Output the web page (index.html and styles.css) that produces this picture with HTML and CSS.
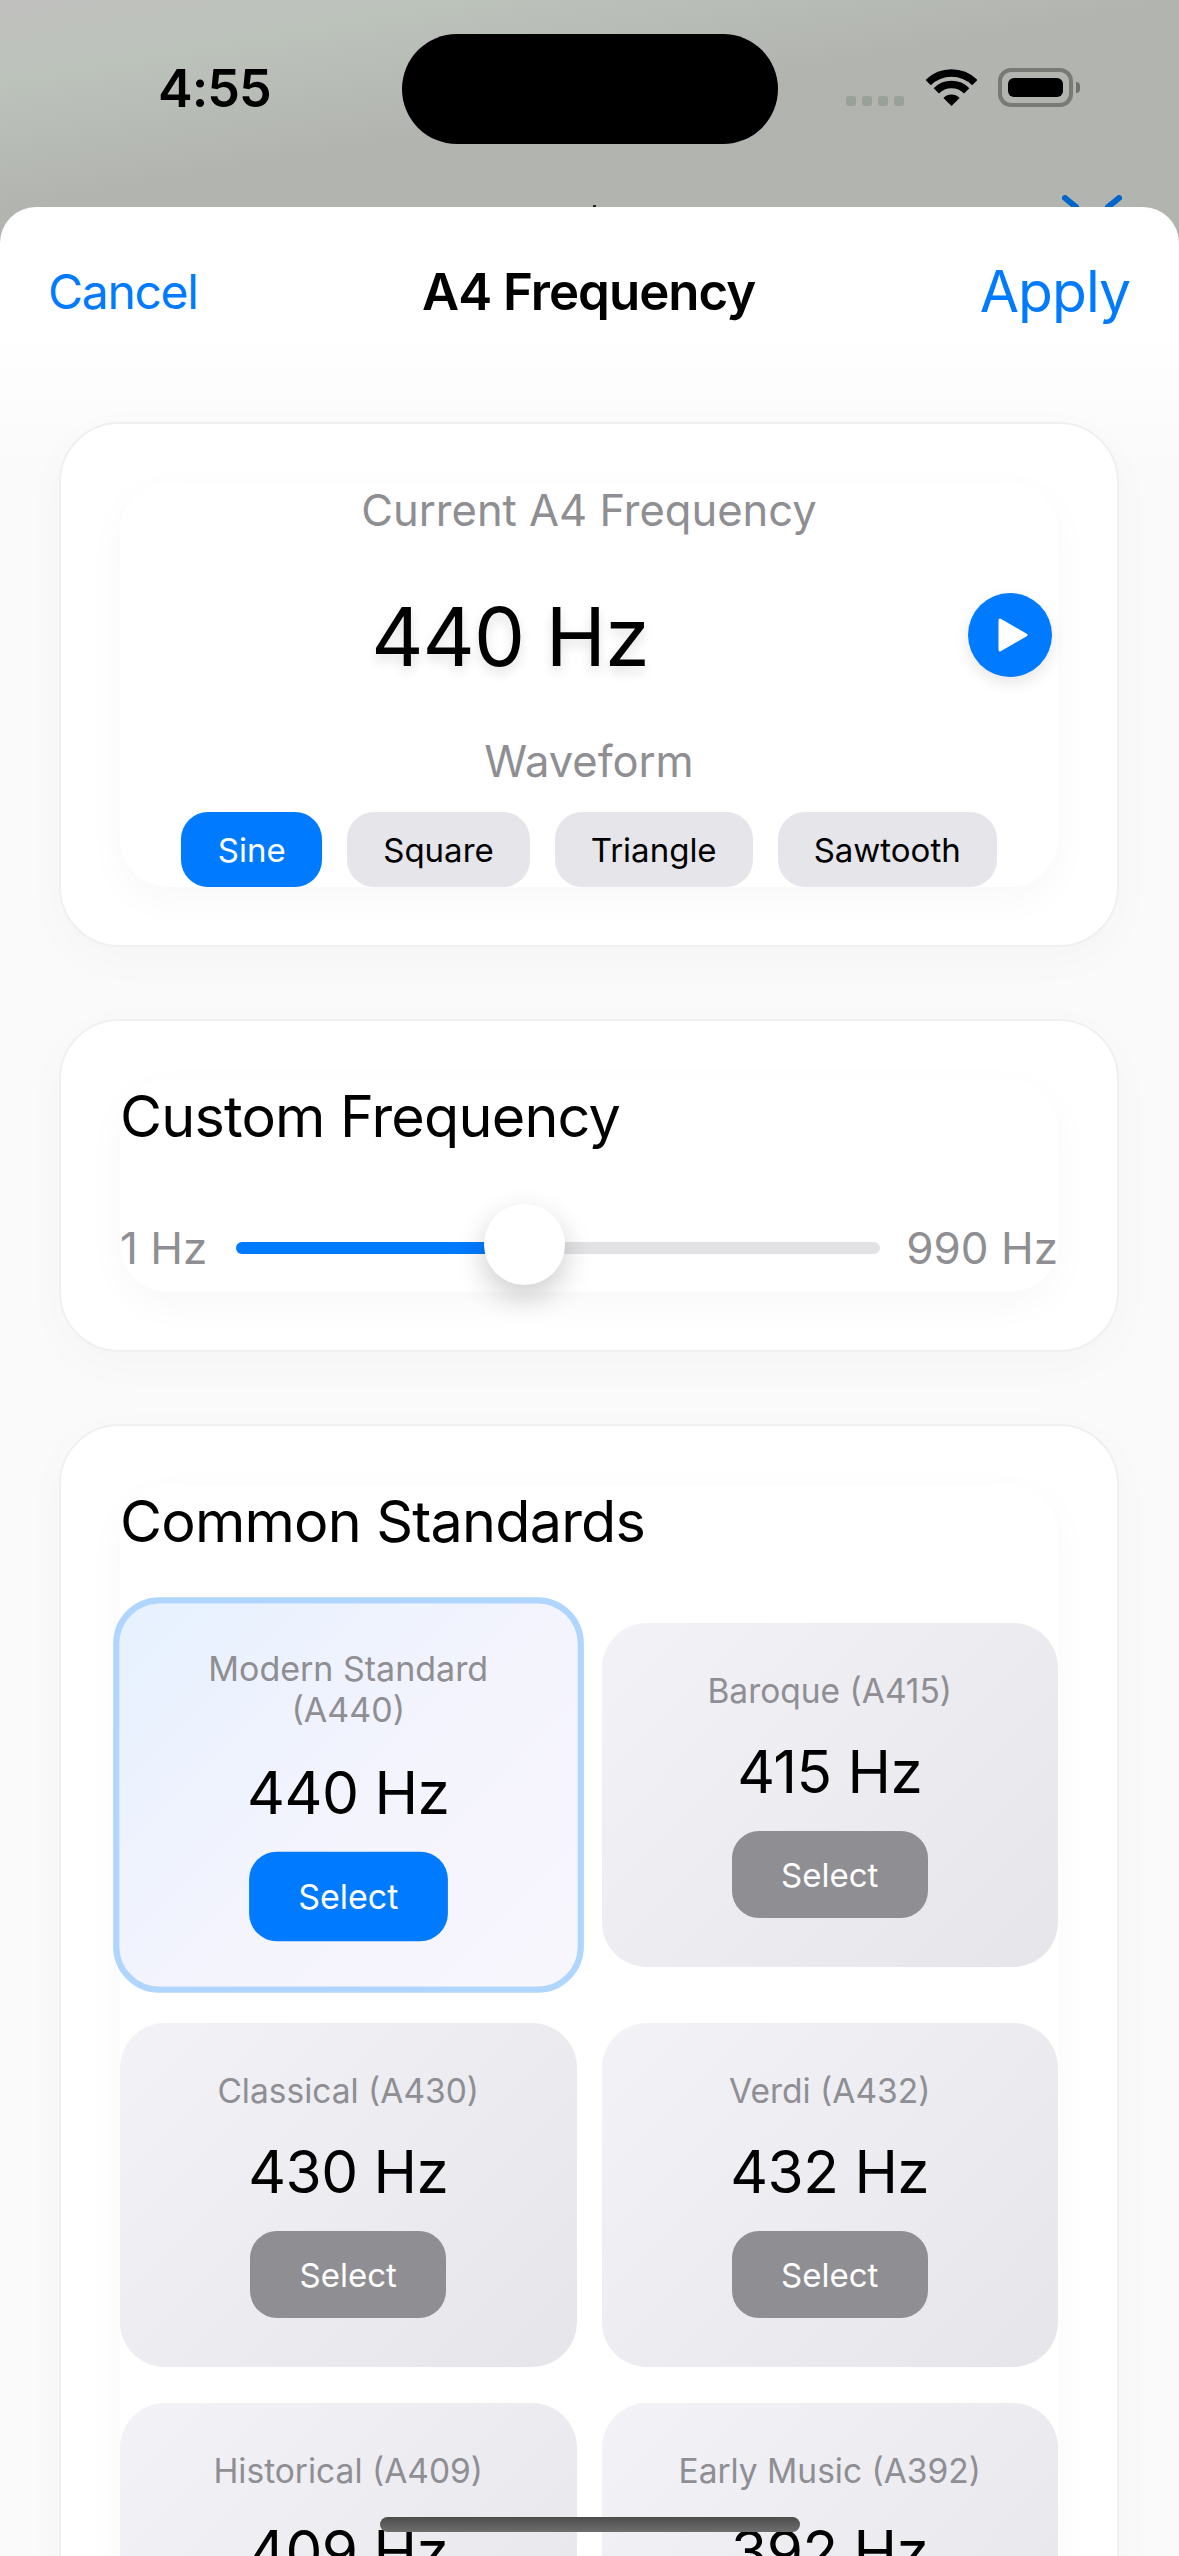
FILE: index.html
```html
<!DOCTYPE html>
<html lang="en">
<head>
  <meta charset="UTF-8">
  <title>A4 Frequency</title>
  <link rel="stylesheet" href="styles.css">
</head>
<body>

  <div class="status-bar">
    <span class="time">4:55</span>
    <div class="island"></div>
    <div class="signal">
      <i></i><i></i><i></i><i></i>
    </div>
    <svg class="wifi" width="51" height="37" viewBox="0 0 51 37">
      <path d="M2.2 13.7A33 33 0 0 1 48.8 13.7" fill="none" stroke="#000" stroke-width="7.5"/>
      <path d="M10.3 21.8A21.5 21.5 0 0 1 40.7 21.8" fill="none" stroke="#000" stroke-width="7.5"/>
      <path d="M25.5 37L17.4 28.9A11.5 11.5 0 0 1 33.6 28.9Z" fill="#000"/>
    </svg>
    <div class="battery"><div class="battery-level"></div></div>
    <div class="battery-cap"></div>
  </div>

  <!-- bits of the page behind the sheet -->
  <svg class="behind-close" width="60" height="12" viewBox="0 0 60 12">
    <path d="M3 3L14 12M57 3L46 12" fill="none" stroke="#0066cc" stroke-width="6" stroke-linecap="round"/>
  </svg>
  <div class="behind-dot"></div>

  <div class="sheet">
    <div class="nav">
      <span class="nav-cancel">Cancel</span>
      <span class="nav-title">A4 Frequency</span>
      <span class="nav-apply">Apply</span>
    </div>

    <div class="cards">
      <section class="card">
        <div class="inner inner-center">
          <div class="muted-label">Current A4 Frequency</div>
          <div class="current-row">
            <div class="spacer"></div>
            <div class="current-value">440 Hz</div>
            <div class="spacer"></div>
            <div class="play">
              <svg width="30" height="34" viewBox="0 0 30 34">
                <path d="M2 2L28 17L2 32Z" fill="#fff" stroke="#fff" stroke-width="3" stroke-linejoin="round"/>
              </svg>
            </div>
          </div>
          <div class="muted-label">Waveform</div>
          <div class="pills">
            <span class="pill pill-active">Sine</span>
            <span class="pill">Square</span>
            <span class="pill">Triangle</span>
            <span class="pill">Sawtooth</span>
          </div>
        </div>
      </section>

      <section class="card">
        <div class="inner">
          <h2 class="card-title">Custom Frequency</h2>
          <div class="slider-row">
            <span class="slider-label">1 Hz</span>
            <div class="track">
              <div class="track-fill"></div>
              <div class="thumb"></div>
            </div>
            <span class="slider-label">990 Hz</span>
          </div>
        </div>
      </section>

      <section class="card">
        <div class="inner">
          <h2 class="card-title">Common Standards</h2>
          <div class="standards">
            <div class="tile tile-selected">
              <div class="tile-label">Modern Standard (A440)</div>
              <div class="tile-value">440 Hz</div>
              <span class="select-btn">Select</span>
            </div>
            <div class="tile">
              <div class="tile-label">Baroque (A415)</div>
              <div class="tile-value">415 Hz</div>
              <span class="select-btn">Select</span>
            </div>
            <div class="tile">
              <div class="tile-label">Classical (A430)</div>
              <div class="tile-value">430 Hz</div>
              <span class="select-btn">Select</span>
            </div>
            <div class="tile">
              <div class="tile-label">Verdi (A432)</div>
              <div class="tile-value">432 Hz</div>
              <span class="select-btn">Select</span>
            </div>
            <div class="tile">
              <div class="tile-label">Historical (A409)</div>
              <div class="tile-value">409 Hz</div>
              <span class="select-btn">Select</span>
            </div>
            <div class="tile">
              <div class="tile-label">Early Music (A392)</div>
              <div class="tile-value">392 Hz</div>
              <span class="select-btn">Select</span>
            </div>
          </div>
        </div>
      </section>
    </div>
  </div>

  <div class="home-indicator"></div>

</body>
</html>
```

FILE: styles.css
```css
* {
  box-sizing: border-box;
}

html, body {
  margin: 0;
  height: 2556px;
  overflow: hidden;
}

body {
  position: relative;
  font-family: Inter, "Liberation Sans", sans-serif;
  color: #000;
  background: linear-gradient(170deg, #c0c0be 0, #bcc3bb 80px, #b2b4b0 207px);
}

/* status bar */
.status-bar {
  display: flex;
  align-items: flex-start;
  height: 207px;
  padding: 34px 0 0 158px;
}

.time {
  width: 112px;
  margin-top: 26px;
  font-size: 52px;
  line-height: 58px;
  font-weight: 600;
  letter-spacing: -1px;
}

.island {
  width: 376px;
  height: 110px;
  margin-left: 132px;
  border-radius: 55px;
  background: #000;
}

.signal {
  display: flex;
  gap: 6px;
  margin: 62px 0 0 68px;
}

.signal i {
  width: 10px;
  height: 10px;
  border-radius: 3px;
  background: #98a098;
}

.wifi {
  margin: 35px 0 0 22px;
}

.battery {
  width: 75px;
  height: 39px;
  margin: 34px 0 0 21px;
  padding: 6px;
  border: 4px solid #777a76;
  border-radius: 13px;
}

.battery-level {
  height: 100%;
  border-radius: 6px;
  background: #000;
}

.battery-cap {
  width: 4px;
  height: 11px;
  margin: 48px 0 0 3px;
  border-radius: 0 6px 6px 0;
  background: #6f726e;
}

.behind-close {
  position: absolute;
  left: 1062px;
  top: 195px;
}

.behind-dot {
  position: absolute;
  left: 593px;
  top: 205px;
  width: 3px;
  height: 2px;
  background: #222;
}

/* sheet */
.sheet {
  position: relative;
  height: 2349px;
  overflow: hidden;
  border-radius: 36px 36px 0 0;
  background: linear-gradient(#fff 0, #fff 120px, #fafafa 260px);
}

.nav {
  display: flex;
  justify-content: space-between;
  align-items: center;
  height: 168px;
  padding: 0 49px 0 48px;
}

.nav-cancel {
  font-size: 48px;
  color: #007aff;
  letter-spacing: -1.3px;
}

.nav-title {
  font-size: 51px;
  font-weight: 600;
  letter-spacing: -1px;
}

.nav-apply {
  font-size: 57px;
  color: #007aff;
  letter-spacing: -1px;
}

.cards {
  display: flex;
  flex-direction: column;
  gap: 72px;
  padding: 47px 60px 0 59px;
}

.card {
  padding: 59px 59px 58px;
  border: 2px solid #f0f0f1;
  border-radius: 60px;
  background: #fff;
  box-shadow: 0 12px 48px rgba(0, 0, 0, 0.025);
}

.inner {
  border-radius: 48px;
  background: #fff;
  box-shadow: 0 12px 40px rgba(0, 0, 0, 0.03);
}

.inner-center {
  display: flex;
  flex-direction: column;
  align-items: center;
}

.muted-label {
  font-size: 43.5px;
  line-height: 54px;
  color: #8e8e93;
}

.current-row {
  display: flex;
  align-items: center;
  align-self: stretch;
  margin: 56px 0 57px;
  padding-right: 6px;
}

.spacer {
  flex: 1;
}

.current-value {
  margin: 4px 68px 0 0;
  font-size: 81px;
  line-height: 76px;
  letter-spacing: -1px;
  text-shadow: 0 6px 12px rgba(0, 0, 0, 0.12);
}

.play {
  display: flex;
  align-items: center;
  justify-content: center;
  width: 84px;
  height: 84px;
  padding-left: 6px;
  border-radius: 50%;
  background: #007aff;
  box-shadow: 0 6px 15px rgba(0, 0, 0, 0.1);
}

.pills {
  display: flex;
  gap: 25px;
  margin-top: 24px;
}

.pill {
  display: flex;
  align-items: center;
  padding: 0 36px;
  height: 75px;
  border-radius: 27px;
  font-size: 33px;
  background: #e5e5ea;
}

.pill-active {
  padding: 0 36.5px;
  color: #fff;
  background: #007aff;
}

.card-title {
  margin: 0;
  font-size: 57.5px;
  line-height: 72px;
  font-weight: 400;
  letter-spacing: -0.8px;
}

.slider-row {
  display: flex;
  align-items: center;
  justify-content: space-between;
  height: 89px;
  margin-top: 51px;
}

.slider-label {
  font-size: 44px;
  color: #8e8e93;
}

.track {
  position: relative;
  width: 644px;
  height: 12px;
  margin-left: 3px;
  border-radius: 6px;
  background: #e2e2e5;
}

.track-fill {
  width: 270px;
  height: 100%;
  border-radius: 6px 0 0 6px;
  background: #007aff;
}

.thumb {
  position: absolute;
  left: 248px;
  top: -38px;
  width: 81px;
  height: 81px;
  border-radius: 50%;
  background: #fff;
  box-shadow: 0 12px 30px rgba(0, 0, 0, 0.2);
}

.standards {
  display: grid;
  grid-template-columns: 1fr 1fr;
  align-items: center;
  column-gap: 25px;
  row-gap: 36px;
  margin-top: 46px;
}

.tile {
  display: flex;
  flex-direction: column;
  align-items: center;
  height: 344px;
  padding: 48px 30px 0;
  border-radius: 45px;
  background: linear-gradient(135deg, #f2f2f7, #e5e5ea);
}

.tile-label {
  font-size: 33.5px;
  line-height: 40px;
  text-align: center;
  color: #8e8e93;
}

.tile-value {
  margin-top: 25px;
  font-size: 58.5px;
  line-height: 72px;
  letter-spacing: -0.5px;
}

.select-btn {
  display: flex;
  align-items: center;
  justify-content: center;
  width: 196px;
  height: 87px;
  margin-top: 23px;
  border-radius: 27px;
  font-size: 33px;
  color: #fff;
  background: #8e8e93;
}

.tile-selected {
  height: 384px;
  padding: 43px 30px 0;
  border: 6px solid #b0d5ff;
  background: linear-gradient(135deg, #e6f1ff, #f4f4fd 55%, #f8f6fd);
  transform: scale(1.03);
}

.tile-selected .tile-label {
  font-size: 33px;
}

.tile-selected .tile-value {
  font-size: 57px;
}

.tile-selected .select-btn {
  width: 193px;
  margin-top: 21px;
  background: #007aff;
}

.home-indicator {
  position: absolute;
  left: 380px;
  top: 2517px;
  width: 420px;
  height: 15px;
  border-radius: 8px;
  background: linear-gradient(#4c4c4c, #6e6e6e);
}
```
